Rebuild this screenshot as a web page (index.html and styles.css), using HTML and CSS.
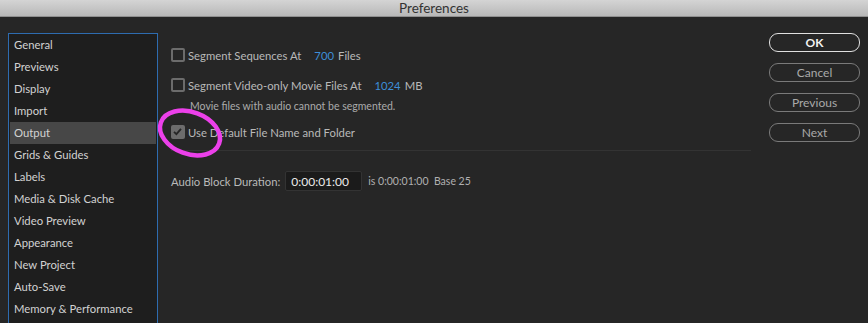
FILE: index.html
```html
<!DOCTYPE html>
<html lang="en">
  <head>
    <meta charset="UTF-8" />
    <title>Preferences</title>
    <link rel="stylesheet" href="styles.css">
  </head>
  <body>
    <div class="titlebar">Preferences</div>
    <div class="window">
      <ul class="sidebar">
        <li>General</li>
        <li>Previews</li>
        <li>Display</li>
        <li>Import</li>
        <li class="selected">Output</li>
        <li>Grids &amp; Guides</li>
        <li>Labels</li>
        <li>Media &amp; Disk Cache</li>
        <li>Video Preview</li>
        <li>Appearance</li>
        <li>New Project</li>
        <li>Auto-Save</li>
        <li>Memory &amp; Performance</li>
      </ul>

      <div class="content">
        <div class="option">
          <span class="checkbox"></span>
          <span class="label">Segment Sequences At</span>
          <span class="value">700</span>
          <span class="unit">Files</span>
        </div>
        <div class="option">
          <span class="checkbox"></span>
          <span class="label">Segment Video-only Movie Files At</span>
          <span class="value">1024</span>
          <span class="unit">MB</span>
        </div>
        <p class="hint">Movie files with audio cannot be segmented.</p>
        <div class="option checked-row">
          <span class="checkbox checked">
            <svg width="13" height="13" viewBox="0 0 13 13">
              <path d="M3 6.8 L5.4 9.2 L10 3.8" fill="none" stroke="#262626" stroke-width="1.8" />
            </svg>
          </span>
          <span class="label">Use Default File Name and Folder</span>
          <svg class="marker" width="74" height="56" viewBox="0 0 74 56">
            <ellipse cx="37" cy="27" rx="31" ry="21" transform="rotate(20 37 27)"
              fill="none" stroke="#ec40ea" stroke-width="4.5" />
          </svg>
        </div>
        <hr class="divider" />
        <div class="duration">
          <span class="label">Audio Block Duration:</span>
          <span class="timecode">0:00:01:00</span>
          <span class="info">is 0:00:01:00&nbsp; Base 25</span>
        </div>
      </div>

      <div class="buttons">
        <button class="btn primary">OK</button>
        <button class="btn">Cancel</button>
        <button class="btn">Previous</button>
        <button class="btn">Next</button>
      </div>
    </div>
  </body>
</html>
```

FILE: styles.css
```css
body {
  margin: 0;
  background: #262626;
  font-family: Lato, "Open Sans", sans-serif;
  font-size: 11.3px;
  color: #b9b9b9;
  height: 323px;
  overflow: hidden;
}

.titlebar {
  height: 16px;
  line-height: 16px;
  text-align: center;
  font-size: 13.5px;
  color: #333;
  background: linear-gradient(#d4d4d4, #b8b8b8);
  border-bottom: 1px solid #8f8f8f;
}

.window {
  display: flex;
  padding: 16px 8px 0 8px;
}

.sidebar {
  list-style: none;
  margin: 0;
  padding: 0 1px;
  width: 146px;
  height: 289px;
  background: #1e1e1e;
  border: 1px solid #2e6cb0;
  border-bottom: none;
  flex-shrink: 0;
}

.sidebar li {
  height: 22px;
  line-height: 22px;
  padding-left: 4px;
  color: #d2d2d2;
}

.sidebar li.selected {
  background: #474747;
}

.content {
  flex: 1;
  padding-left: 13px;
  padding-right: 18px;
}

.option {
  display: flex;
  align-items: center;
  height: 16px;
  margin-top: 14px;
  position: relative;
}

.checkbox {
  width: 10px;
  height: 10px;
  border: 2px solid #6c6c6c;
  border-radius: 2px;
  margin-right: 3px;
  position: relative;
}

.checkbox.checked {
  background: #6c6c6c;
}

.checkbox svg {
  position: absolute;
  left: -2px;
  top: -2px;
}

.option .value {
  color: #3d8ed8;
  margin-left: 13px;
}

.option .unit {
  margin-left: 4px;
}

.hint {
  margin: 5px 0 0 19px;
  font-size: 10.5px;
  color: #ababab;
  line-height: 16px;
}

.checked-row {
  margin-top: 10px;
}

.marker {
  position: absolute;
  left: -18px;
  top: -18px;
}

.divider {
  border: none;
  border-top: 1px solid #333;
  margin: 10px 0 0 0;
}

.duration {
  display: flex;
  align-items: center;
  margin-top: 20px;
}

.timecode {
  width: 70px;
  height: 18px;
  line-height: 20px;
  padding-left: 5px;
  margin-left: 5px;
  background: #1b1b1b;
  border: 1px solid #333;
  border-radius: 2px;
  font-size: 12px;
  color: #ececec;
}

.info {
  margin-left: 6px;
  font-size: 10.5px;
  color: #b0b0b0;
}

.buttons {
  display: flex;
  flex-direction: column;
  gap: 11px;
}

.btn {
  width: 91px;
  height: 19px;
  padding: 0;
  background: transparent;
  border: 1.5px solid #7a7a7a;
  border-radius: 9px;
  font-family: Lato, "Open Sans", sans-serif;
  font-size: 12px;
  color: #a9a9a9;
}

.btn.primary {
  border-color: #e0e0e0;
  color: #f2f2f2;
  font-weight: bold;
}
```
